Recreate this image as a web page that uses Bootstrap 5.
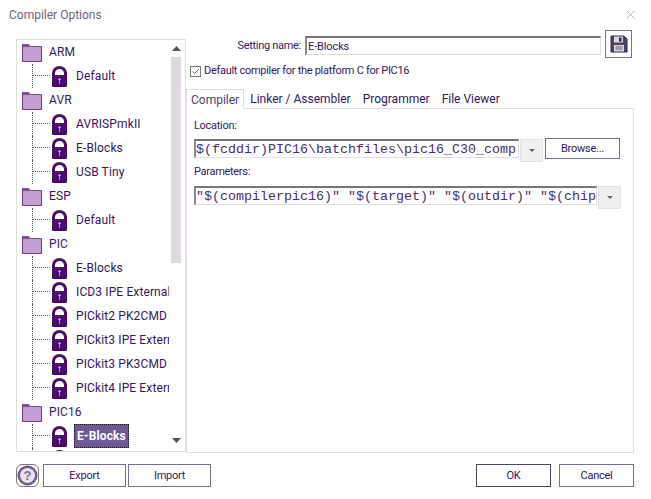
<!DOCTYPE html>
<html lang="en"><head><meta charset="utf-8"><title>Compiler Options</title>
<link href="https://cdn.jsdelivr.net/npm/bootstrap@5.3.0/dist/css/bootstrap.min.css" rel="stylesheet">
<style>
html,body{height:499px;overflow:hidden;background:#fff}
body{font-family:Roboto,"Liberation Sans",sans-serif;font-size:12px;color:#33185f;line-height:16px}
.dlg{width:651px;height:499px;padding:0 17px 0 16px}
.titlebar{height:39px;margin-left:-7px;padding-top:7px;color:#6f6383;font-size:12px}
.closex{margin-top:3px;margin-right:-1px}
.mainrow{height:413px}
.treebox{width:170px;height:413px;border:1px solid #e2dce3;overflow:hidden;flex:none}
.treelist{width:152px;flex:none;overflow:hidden}
.trow{height:24px;white-space:nowrap;overflow:hidden;color:#33185f;letter-spacing:.12px}
.fold{margin-left:5px;margin-right:7px;flex:none}
.dots{width:18px;height:24px;margin-left:15px;flex:none;border-left:1px dotted #555;position:relative}
.dots::after{content:"";display:block;width:17px;margin-top:11px;border-top:1px dotted #555}
.lock{margin-left:2px;margin-right:9px;flex:none;margin-top:1px}
.sel{background:#6d5a94;color:#fff;font-weight:700;outline:1px dotted #111;outline-offset:-1px;padding:0 3px;margin-left:-2px;line-height:24px}
.sbar{width:16px;background:#fff;flex:none;display:flex;flex-direction:column}
.sarrow{height:17px;padding-right:2px}
.sthumb{height:206px;width:10px;margin-left:2px;background:#e0d9e1}
.dnarrow{margin-top:auto;margin-bottom:2px}
.rightpane{width:448px;flex:none;margin-top:-3px}
.lbl-end{width:103px;margin-left:12px}
.tight{font-size:11px;letter-spacing:-.3px}
.namefld{width:296px;height:19px;margin-left:4px;border:1px solid #e2dfe3;border-top:2px solid #777;border-left:2px solid #8a8a8a;border-radius:0;padding:0 1px;font-size:11px;letter-spacing:-.12px;color:#33185f;box-shadow:none}
.savebtn{width:27px;height:28px;margin-left:4px;border:1px solid #777;border-radius:0;padding:0;margin-top:-4px;background:#fff}
.chkline{height:20px;margin-left:4px;margin-top:6px}
.chkb{width:11px;height:11px;border:1px solid #7b7b7b;flex:none;margin-right:3px}
.tabstrip{height:28px;padding-top:9px;border:0;margin-top:0;flex-wrap:nowrap}
.tabstrip .nav-link{padding:1px 6px;border:0;border-radius:0;color:#33185f;line-height:16px;background:none;font-size:12px}
.tabstrip .nav-link.active{border:1px solid #e2dce3;border-bottom:1px solid #fff;color:#4d4270;padding:2px 4px 1px 4px;margin:-1px 0 -1px 0;height:20px;z-index:2;position:relative}
.tabbody{height:345px;margin-top:-1px;border:1px solid #e2dce3;padding:9px 12px 0 7px}
.cap{height:16px;color:#33185f}
.pathfld{height:19px;border:1px solid #e2dfe3;border-top:2px solid #777;border-left:2px solid #8a8a8a;border-radius:0;padding:0;font-family:"Liberation Mono",monospace;font-size:13.33px;line-height:17px;color:#4b2d6f;box-shadow:none;white-space:nowrap;overflow:hidden}
.wid1{width:325px}.wid2{width:405px}
.dd{width:23px;height:23px;margin-left:1px;background:#f0eff0;border:1px solid #e4e1e5;border-radius:0;padding:0;flex:none}
.tri{display:block;width:0;height:0;margin:auto;border-left:3px solid transparent;border-right:3px solid transparent;border-top:3px solid #666}
.wbtn{height:21px;border-radius:0;background:#fff;padding:0;font-size:11px;letter-spacing:-.25px;color:#33185f;line-height:17px;border:1px solid #7d6c8d}
.browsebtn{width:75px;margin-left:2px;margin-top:-1px}
.footrow{height:23px;margin-top:12px;padding-right:0}
.helpb{width:23px;height:23px;border:1px solid #777;padding:0;margin-right:4px;line-height:0}
.footbtn{width:83px;height:23px;margin-right:2px}
.okbtn{width:75px;height:23px;border-color:#4f4267;margin-right:8px}
.canc{width:75px;height:23px}
.locgroup{margin-top:5px;margin-bottom:2px}
.paramgroup{margin-top:6px}
</style></head><body>
<div class="dlg">
 <div class="titlebar d-flex justify-content-between"><span>Compiler Options</span>
  <svg class="closex" width="9" height="9" viewBox="0 0 9 9"><path d="M.5.5l8 8M8.500.5l-8 8" stroke="#b5b0ba" fill="none"/></svg></div>
 <div class="mainrow d-flex">
  <div class="treebox d-flex">
   <div class="treelist" id="tree"></div>
   <div class="sbar">
    <div class="sarrow d-flex align-items-center justify-content-center"><svg width="9" height="5" viewBox="0 0 9 5"><path d="M4.500 0l4.500 5H0z" fill="#555"/></svg></div>
    <div class="sthumb"></div>
    <div class="sarrow d-flex align-items-center justify-content-center dnarrow"><svg width="9" height="5" viewBox="0 0 9 5"><path d="M0 0h9L4.500 5z" fill="#555"/></svg></div>
   </div>
  </div>
  <div class="rightpane">
   <div class="d-flex align-items-center" style="height:19px">
    <span class="lbl-end text-end tight">Setting name:</span>
    <input class="form-control namefld" value="E-Blocks" readonly>
    <button class="btn savebtn d-flex align-items-center justify-content-center" aria-label="Save">
     <svg width="18" height="18" viewBox="0 0 18 18"><path d="M1 1h13l3 3v13H1z" fill="#4e4560" stroke="#33284a"/><rect x="4" y="1.500" width="9" height="6" fill="#d9d4dd"/><rect x="9" y="2.500" width="2.500" height="4" fill="#33284a"/><rect x="4" y="10" width="10" height="6.500" fill="#d8d4dc"/><path d="M5.500 12h7M5.500 14h7" stroke="#6a6075"/></svg>
    </button>
   </div>
   <div class="chkline d-flex align-items-center">
    <span class="chkb d-flex align-items-center justify-content-center"><svg width="9" height="9" viewBox="0 0 9 9"><path d="M1.500 4.500l2 2L8 2" stroke="#666" fill="none"/></svg></span>
    <span class="tight">Default compiler for the platform C for PIC16</span>
   </div>
   <ul class="nav tabstrip">
    <li class="nav-item"><a class="nav-link active" href="#">Compiler</a></li>
    <li class="nav-item"><a class="nav-link" href="#">Linker / Assembler</a></li>
    <li class="nav-item"><a class="nav-link" href="#">Programmer</a></li>
    <li class="nav-item"><a class="nav-link" href="#">File Viewer</a></li>
   </ul>
   <div class="tabbody">
    <div class="cap tight">Location:</div>
    <div class="d-flex locgroup">
     <div class="pathfld wid1">$(fcddir)PIC16\batchfiles\pic16_C30_comp</div>
     <button class="btn dd d-flex align-items-center" aria-label="Open"><span class="tri"></span></button>
     <button class="btn wbtn browsebtn">Browse...</button>
    </div>
    <div class="cap tight">Parameters:</div>
    <div class="d-flex locgroup paramgroup">
     <div class="pathfld wid2">"$(compilerpic16)" "$(target)" "$(outdir)" "$(chip</div>
     <button class="btn dd d-flex align-items-center" aria-label="Open"><span class="tri"></span></button>
    </div>
   </div>
  </div>
 </div>
 <div class="footrow d-flex">
  <button class="btn helpb d-flex align-items-center justify-content-center" aria-label="Help">
   <svg width="21" height="21" viewBox="0 0 21 21"><circle cx="10.500" cy="10.500" r="10" fill="#6f5b88"/><circle cx="10.500" cy="10.500" r="7.500" fill="#e9e3ee"/><text x="10.500" y="15" text-anchor="middle" font-family="Liberation Sans" font-weight="700" font-size="13" fill="#7d6a96">?</text></svg>
  </button>
  <button class="btn wbtn footbtn">Export</button>
  <button class="btn wbtn footbtn">Import</button>
  <span class="flex-grow-1"></span>
  <button class="btn wbtn okbtn">OK</button>
  <button class="btn wbtn canc">Cancel</button>
 </div>
</div>
<script>
var f='<svg class="fold" width="20" height="19" viewBox="0 0 20 19"><path d="M.5 1.500h5l1 2h13v15H.5z" fill="#c39ed6" stroke="#6f3f84"/><path d="M1 1h6l1 2h11v1H1z" fill="#7d4f92"/></svg>';
var l='<svg class="lock" width="15" height="21" viewBox="0 0 15 21"><path fill-rule="evenodd" d="M0 19.500V7a7.500 7 0 0 1 15 0v12.500a1.500 1.500 0 0 1-1.500 1.500h-12A1.500 1.500 0 0 1 0 19.500zM3 9h9V7a4.500 4 0 0 0-9 0z" fill="#4a0f6a"/><path d="M7.500 12v6M6 13.500h3" stroke="#b79ac8"/></svg>';
var d=[["ARM",0],["Default",1],["AVR",0],["AVRISPmkII",1],["E-Blocks",1],["USB Tiny",1],["ESP",0],["Default",1],["PIC",0],["E-Blocks",1],["ICD3 IPE External",1],["PICkit2 PK2CMD IF",1],["PICkit3 IPE External",1],["PICkit3 PK3CMD IF",1],["PICkit4 IPE External",1],["PIC16",0],["E-Blocks",2],["PICkit",1]];
document.getElementById('tree').innerHTML=d.map(function(r){
 if(!r[1])return '<div class="trow d-flex align-items-center">'+f+'<span>'+r[0]+'</span></div>';
 return '<div class="trow d-flex align-items-center"><span class="dots"></span>'+l+'<span class="'+(r[1]==2?'sel':'')+'">'+r[0]+'</span></div>';
}).join('');
</script>
<script src="https://cdn.jsdelivr.net/npm/bootstrap@5.3.0/dist/js/bootstrap.bundle.min.js"></script>
</body></html>
